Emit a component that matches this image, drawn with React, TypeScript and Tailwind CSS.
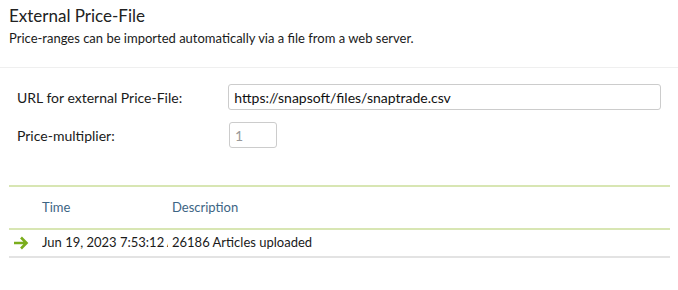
export default function App() {
  return (
    <div className="w-[678px] h-[290px] bg-white text-[#1a1a1a] font-['Lato',sans-serif]">
      <div className="px-[9px] pt-[4px] pb-[19px] border-b border-[#efefef]">
        <h1 className="text-[17px] leading-[24px] text-[#222]">External Price-File</h1>
        <p className="text-[13px] leading-[20px]">Price-ranges can be imported automatically via a file from a web server.</p>
      </div>
      <div className="px-[17px] pt-[16px] flex flex-col gap-[12px]">
        <div className="flex items-center">
          <label className="w-[212px] text-[14px]">URL for external Price-File:</label>
          <input
            readOnly
            value="https://snapsoft/files/snaptrade.csv"
            className="w-[434px] h-[26px] border border-[#ccc] rounded-[3px] px-[5px] text-[14px] text-[#111] outline-none"
          />
        </div>
        <div className="flex items-center">
          <label className="w-[212px] text-[14px]">Price-multiplier:</label>
          <input
            readOnly
            value="1"
            className="w-[48px] h-[26px] border border-[#ccc] rounded-[3px] px-[5px] text-[14px] text-[#999] outline-none"
          />
        </div>
      </div>
      <div className="mx-[9px] mt-[37px] w-[661px]">
        <div className="border-t-2 border-[#d8e6b3] h-[43px] flex items-center text-[13px] text-[#3d6584]">
          <div className="w-[163px] pl-[33px]">Time</div>
          <div>Description</div>
        </div>
        <div className="border-t-2 border-b-2 border-t-[#d8e6b3] border-b-[#e3e3e3] h-[30px] flex items-center text-[13px]">
          <svg width="16" height="14" viewBox="0 0 16 14" className="ml-[4px] mr-[13px]">
            <path d="M1 7h12.5M8 1.5l5.5 5.5-5.5 5.5" stroke="#7aad1c" strokeWidth="2.6" fill="none" strokeLinejoin="miter" />
          </svg>
          <div className="w-[126px] mr-[4px] whitespace-nowrap overflow-hidden">Jun 19, 2023 7:53:12 AM</div>
          <div>26186 Articles uploaded</div>
        </div>
      </div>
    </div>
  );
}
